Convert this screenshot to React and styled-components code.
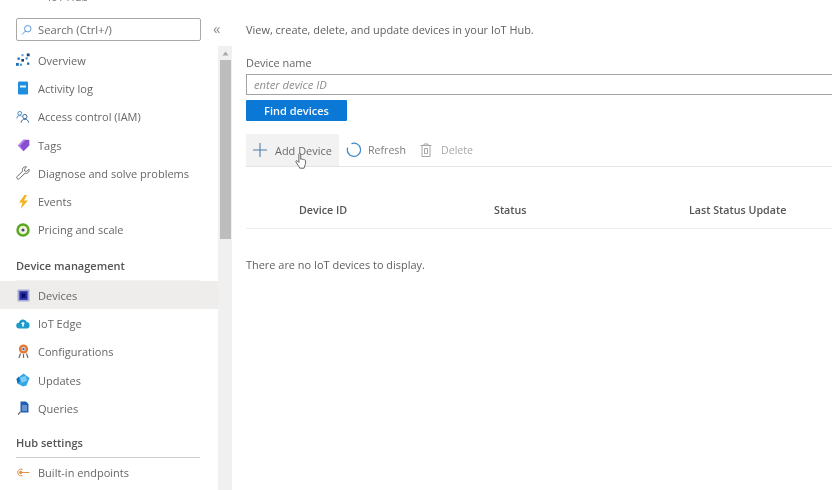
import React from "react";
import styled, { createGlobalStyle } from "styled-components";

const Global = createGlobalStyle`
  html, body { margin: 0; padding: 0; background: #fff; }
  body { font-family: "Open Sans", "Noto Sans", sans-serif; overflow: hidden; }
`;

const Page = styled.div`
  width: 832px; height: 490px; display: flex; overflow: hidden; background: #fff;
  filter: blur(0.45px);
`;
const Sidebar = styled.aside`
  width: 218px; flex: none; display: flex; flex-direction: column;
`;
const TitleClip = styled.div`
  height: 3px; padding-left: 48px; overflow: hidden; display: flex; align-items: flex-end;
  font-size: 11px; line-height: 12px; color: #777;
`;
const SearchBox = styled.div`
  margin: 15px 17px 0 16px; height: 21px; display: flex; align-items: center; gap: 6px;
  border: 1px solid #a9a9a9; border-radius: 2px; padding-left: 4px;
  font-size: 11.2px; color: #6b6b6b;
`;
const Nav = styled.nav`
  margin-top: 5px; display: flex; flex-direction: column;
`;
const Row = styled.div`
  height: ${p => p.$h || 28.3}px; display: flex; align-items: center; gap: 8px; padding-left: 16px;
  font-size: 11px; color: #666;
  background: ${p => (p.$active ? "#eeedec" : "transparent")};
`;
const IconBox = styled.span`
  width: 14px; height: 15px; display: flex; align-items: center; justify-content: center; flex: none;
`;
const SectionLabel = styled.div`
  height: ${p => p.$h}px; display: flex; align-items: flex-end; padding: 0 0 7px 16px; box-sizing: border-box;
  font-size: 11px; font-weight: 600; color: #555;
`;
const SectionRule = styled.div`
  height: 1px; margin: 0 18px 0 16px; background: ${p => p.$c};
`;
const Rail = styled.div`
  width: 14px; flex: none; display: flex; flex-direction: column; background: #fff;
`;
const Collapse = styled.div`
  height: 46px; box-sizing: border-box; padding-top: 19px; margin-left: -5px; display: flex;
  font-size: 15px; line-height: 18px; color: #8b8f96; background: transparent;
`;
const Track = styled.div`
  flex: 1; background: #f0f0f0; display: flex; flex-direction: column; align-items: stretch;
`;
const ArrowCell = styled.div`
  height: 14px; display: flex; align-items: center; justify-content: center;
`;
const Thumb = styled.div`
  height: 179px; margin: 0 1px 0 2px; background: #bdbdbd;
`;
const Main = styled.main`
  flex: 1; min-width: 0; padding: 22px 0 0 14px; font-size: 10.95px; color: #5f5f5f;
`;
const Intro = styled.div`
  height: 16px; line-height: 16px;
`;
const FieldLabel = styled.div`
  margin-top: 17px; height: 16px; line-height: 16px; color: #666;
`;
const DeviceInput = styled.div`
  margin-top: 3px; height: 21px; box-sizing: border-box; margin-right: -4px;
  border: 1px solid #a3a3a3; display: flex; align-items: center; padding-left: 7px;
  font-style: italic; color: #8d8d8d; font-size: 11.2px;
`;
const FindButton = styled.div`
  margin-top: 5px; width: 101px; height: 21px; background: #0b78d6; border-radius: 1px;
  display: flex; align-items: center; justify-content: center;
  color: #f4f9fd; font-weight: 600; font-size: 11px;
`;
const Toolbar = styled.div`
  margin-top: 13px; height: 33px; box-sizing: border-box; display: flex; align-items: stretch;
  border-bottom: 1px solid #e4e4e4;
`;
const ToolButton = styled.div`
  display: flex; align-items: center; gap: ${p => p.$gap}px; position: relative;
  width: ${p => p.$w}px; padding-left: ${p => p.$pl}px; box-sizing: border-box;
  background: ${p => (p.$hover ? "#f2f2f2" : "transparent")};
  color: ${p => p.$c};
  font-size: ${p => p.$fs || 10.95}px;
`;
const Cursor = styled.svg`
  position: absolute; left: 49px; top: 17px;
`;
const TableHead = styled.div`
  height: 62px; box-sizing: border-box; display: grid; grid-template-columns: 195px 195px 1fr;
  padding: 35px 0 0 53px; border-bottom: 1px solid #eeeeee; white-space: nowrap;
  font-weight: 600; color: #555; line-height: 16px; font-size: 10.7px;
`;
const Empty = styled.div`
  margin-top: 28px; line-height: 16px;
`;

const icons = {
  overview: (
    <svg width="14" height="14" viewBox="0 0 14 14"><g fill="#1c6fb8"><rect x="0" y="10" width="2.8" height="2.8"/><rect x="1.5" y="4.5" width="2.3" height="2.3"/><rect x="5.4" y="6" width="2.6" height="2.6" fill="#163d7a"/><rect x="5.5" y="1.2" width="2" height="2" fill="#4aa0dc"/><rect x="10.8" y="0.5" width="2.8" height="2.8" fill="#163d7a"/><rect x="9.6" y="4.4" width="2" height="2" fill="#2d7fc4"/><rect x="3.8" y="10.6" width="2.3" height="2.3" fill="#4aa0dc"/><rect x="11" y="9.5" width="2.3" height="2.3"/></g></svg>
  ),
  log: (
    <svg width="12" height="14" viewBox="0 0 12 14"><rect x="1" y="0.5" width="10" height="13" rx="1.2" fill="#1e8fe0"/><rect x="3" y="4.5" width="6" height="2" fill="#e8f4fd"/></svg>
  ),
  iam: (
    <svg width="15" height="14" viewBox="0 0 15 14" fill="none" stroke="#3f82c4" strokeWidth="1"><circle cx="4" cy="3" r="2"/><path d="M1 8.5c0-2 1.4-3 3-3 .8 0 1.4.2 2 .7"/><circle cx="9.5" cy="6.5" r="2.3" stroke="#2c5f9c"/><path d="M5.5 13c.2-2.4 1.8-3.6 4-3.6s3.8 1.2 4 3.6" stroke="#2c5f9c"/></svg>
  ),
  tag: (
    <svg width="13" height="13" viewBox="0 0 13 13"><path d="M6.5.8h5.2a.6.6 0 0 1 .6.6v5.2L6.6 12.3.9 6.5z" fill="#8a4fd0"/><path d="M.9 6.5 6.5.8h2.2L3 6.7l3.6 5.6z" fill="#b488e8"/></svg>
  ),
  wrench: (
    <svg width="14" height="14" viewBox="0 0 14 14" fill="none" stroke="#6d6d6d" strokeWidth="1"><path d="M13 3.2 10.7 5.4 8.8 5 8.4 3.2 10.6 1C8.6.2 6.6 1.4 6.4 3.4c0 .7.1 1.2.3 1.6L1.2 10.6a1.5 1.5 0 0 0 2.2 2.1l5.6-5.5c2.4.8 4.7-1.3 4-4z"/></svg>
  ),
  bolt: (
    <svg width="11" height="14" viewBox="0 0 11 14"><path d="M6.5 0 1 7.4h3.6L2.6 14 10 5.5H6L9 0z" fill="#f6b21b"/></svg>
  ),
  pricing: (
    <svg width="14" height="14" viewBox="0 0 14 14"><circle cx="7" cy="7" r="5.5" fill="#f3f3d8" stroke="#58a81f" strokeWidth="2.4"/><circle cx="7" cy="7" r="1.6" fill="#444c7c"/></svg>
  ),
  chip: (
    <svg width="13" height="13" viewBox="0 0 13 13"><rect x="0.5" y="0.5" width="12" height="12" rx="1" fill="#a8aad6"/><rect x="2.4" y="2.2" width="8.2" height="8.6" fill="#2a2ea6"/><rect x="4.6" y="4.5" width="3.8" height="4" fill="#0a0d66"/></svg>
  ),
  edge: (
    <svg width="14" height="12" viewBox="0 0 14 12"><path d="M3.3 10.5a2.9 2.9 0 0 1-.3-5.8 4.1 4.1 0 0 1 7.8-.7 3.3 3.3 0 0 1 .1 6.5z" fill="#1a9bc9"/><path d="M7 3.8 9 6H7.8v2.4H6.2V6H5z" fill="#fff"/></svg>
  ),
  config: (
    <svg width="13" height="15" viewBox="0 0 13 15"><circle cx="6.5" cy="5" r="4.6" fill="#e8792c"/><circle cx="6.5" cy="5" r="2.2" fill="#c9d2df"/><circle cx="6.5" cy="5" r="1" fill="#5b4a9a"/><path d="M2 14l1.5-4.5M11 14 9.5 9.5M6.5 14v-4" stroke="#6c6c6c" strokeWidth="1.2"/></svg>
  ),
  updates: (
    <svg width="14" height="14" viewBox="0 0 14 14"><path d="M7.5.5 13.5 5 10.5 12.5 7 13.5 1.5 10.5 .5 6z" fill="#34a6e6"/><path d="M4 4.5 9.5 3l1.6 4.4L5.5 10z" fill="#7fcdf2"/><path d="M.5 6 3 3.4 4 8.5 1.5 10.5z" fill="#1670b8"/></svg>
  ),
  queries: (
    <svg width="13" height="14" viewBox="0 0 13 14"><path d="M3.5.5h5.5l2.5 2.5v8.5H3.5z" fill="#1f5fb4"/><path d="M5 5h5M5 7h5M5 9h5" stroke="#cfe2f6" strokeWidth=".8"/><path d="M3.4 11 1 13.5" stroke="#666" strokeWidth="1.1"/></svg>
  ),
  endpoint: (
    <svg width="13" height="9" viewBox="0 0 13 9" fill="none" stroke="#e0904a" strokeWidth="1"><path d="M5.5 1.4A3.4 3.4 0 1 0 5.5 7.6"/><circle cx="3.6" cy="4.5" r="1.2" fill="#e0904a"/><path d="M4.5 4.5h8"/></svg>
  ),
};

const group1 = [
  ["overview", "Overview"], ["log", "Activity log"], ["iam", "Access control (IAM)"], ["tag", "Tags"],
  ["wrench", "Diagnose and solve problems"], ["bolt", "Events"], ["pricing", "Pricing and scale"],
];
const group2 = [
  ["chip", "Devices", true], ["edge", "IoT Edge"], ["config", "Configurations"], ["updates", "Updates"], ["queries", "Queries"],
];

const NavRow = ({ icon, label, active }) => (
  <Row $active={active}><IconBox>{icons[icon]}</IconBox>{label}</Row>
);

export default function App() {
  return (
    <Page>
      <Global />
      <Sidebar>
        <TitleClip>IoT Hub</TitleClip>
        <SearchBox>
          <svg width="11" height="12" viewBox="0 0 13 13" fill="none" stroke="#4a8fd4" strokeWidth="1.1"><circle cx="8" cy="5" r="3.8"/><path d="M5.4 7.6 1.2 11.8"/></svg>
          Search (Ctrl+/)
        </SearchBox>
        <Nav>
          {group1.map(([i, l]) => <NavRow key={l} icon={i} label={l} />)}
          <SectionLabel $h={36}>Device management</SectionLabel>
          <SectionRule $c="#f3f3f3" />
          {group2.map(([i, l, a]) => <NavRow key={l} icon={i} label={l} active={a} />)}
          <SectionLabel $h={34}>Hub settings</SectionLabel>
          <SectionRule $c="#cfcfcf" />
          <Row $h={30}><IconBox>{icons.endpoint}</IconBox>Built-in endpoints</Row>
        </Nav>
      </Sidebar>
      <Rail>
        <Collapse>«</Collapse>
        <Track>
          <ArrowCell>
            <svg width="7" height="5" viewBox="0 0 7 5"><path d="M3.5 .5 6.5 4.5H.5z" fill="#a8a8a8"/></svg>
          </ArrowCell>
          <Thumb />
        </Track>
      </Rail>
      <Main>
        <Intro>View, create, delete, and update devices in your IoT Hub.</Intro>
        <FieldLabel>Device name</FieldLabel>
        <DeviceInput>enter device ID</DeviceInput>
        <FindButton>Find devices</FindButton>
        <Toolbar>
          <ToolButton $hover $w={93} $pl={6} $gap={7} $c="#6a6a6a">
            <svg width="16" height="16" viewBox="0 0 16 16" stroke="#4f7fa8" strokeWidth="1.1"><path d="M8 1v14M1 8h14" /></svg>
            Add Device
            <Cursor width="13" height="19" viewBox="0 0 13 17"><path d="M4 1.6c.7-.8 1.6-.4 1.7.6v5c.5-.5 1.4-.4 1.6.3.5-.4 1.4-.3 1.6.4.6-.3 1.5 0 1.6.8.2 1.6 0 3.6-.8 5.3-.3.7-.6 1.5-.6 2.2H4.8c-.3-1.2-1.2-2-2-3.2L1 10c-.5-1 .6-1.8 1.5-1l1.4 1.4V2.4z" fill="#fff" stroke="#555" strokeWidth=".9"/></Cursor>
          </ToolButton>
          <ToolButton $w={80} $pl={7} $gap={6} $c="#7c7c7c" $fs={10.6}>
            <svg width="16" height="16" viewBox="0 0 16 16" fill="none" stroke="#3f87c9" strokeWidth="1.2"><path d="M5.4 1.7A6.6 6.6 0 1 1 1.7 5.6"/></svg>
            Refresh
          </ToolButton>
          <ToolButton $w={70} $gap={9} $pl={1} $c="#a8a8a8" $fs={10.6}>
            <svg width="12" height="14" viewBox="0 0 12 14" fill="none" stroke="#a6a6a6" strokeWidth="1"><path d="M.5 2.5h11M4 2.5V1h4v1.5M2 2.5v11h8v-11M4.5 5.5h3v5h-3z"/></svg>
            Delete
          </ToolButton>
        </Toolbar>
        <TableHead>
          <span>Device ID</span><span>Status</span><span>Last Status Update</span>
        </TableHead>
        <Empty>There are no IoT devices to display.</Empty>
      </Main>
    </Page>
  );
}
